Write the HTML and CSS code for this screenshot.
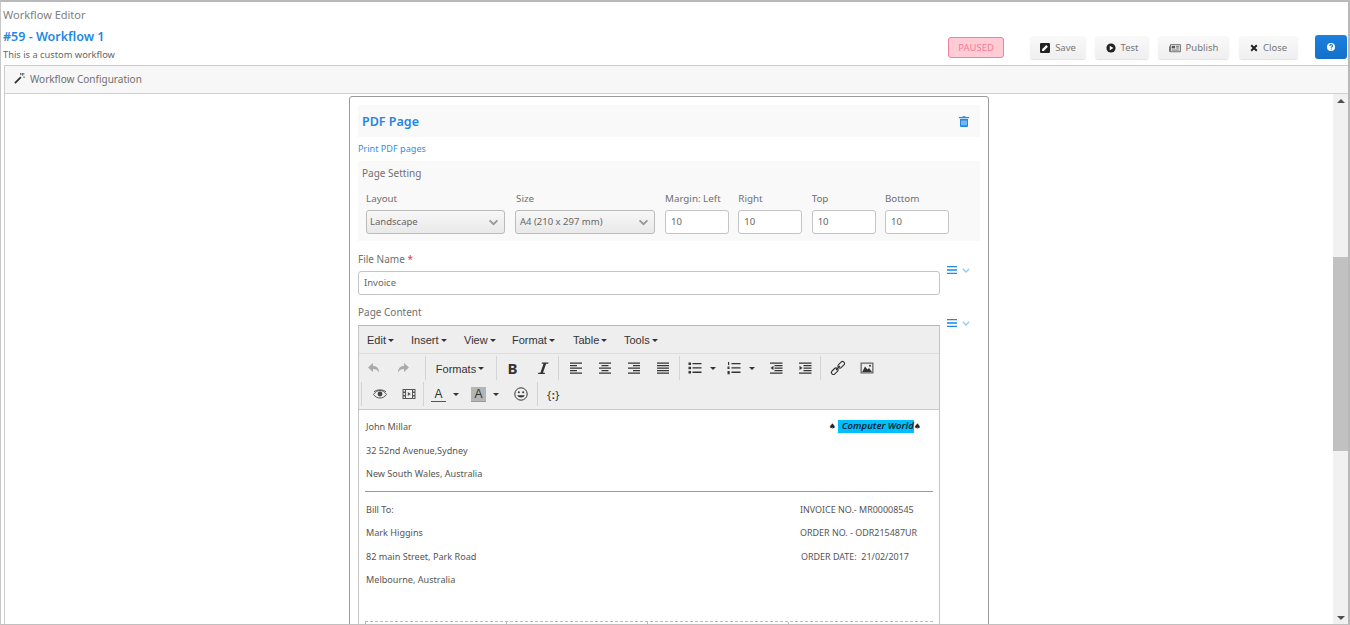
FILE: index.html
```html
<!DOCTYPE html>
<html lang="en">
<head>
<meta charset="utf-8">
<title>Workflow Editor</title>
<link rel="stylesheet" href="styles.css">
</head>
<body>
<div class="frame">
  <header class="top">
    <div class="titles">
      <div class="crumb">Workflow Editor</div>
      <h1 class="wf-name">#59 - Workflow 1</h1>
      <div class="wf-desc">This is a custom workflow</div>
    </div>
    <div class="actions">
      <span class="badge">PAUSED</span>
      <button class="btn btn-save"><svg viewBox="0 0 12 12" class="bi"><path d="M1.500 0h9A1.500 1.500 0 0 1 12 1.500v9a1.500 1.500 0 0 1-1.500 1.500h-9A1.500 1.500 0 0 1 0 10.500v-9A1.500 1.500 0 0 1 1.500 0z" fill="#222"/><path d="M2.500 9.500V7.500L7.500 2.500l2 2-5 5z" fill="#fff"/></svg>Save</button>
      <button class="btn btn-test"><svg viewBox="0 0 12 12" class="bi"><circle cx="6" cy="6" r="5.500" fill="#222"/><path d="M4.500 3.200 9 6l-4.500 2.800z" fill="#fff"/></svg>Test</button>
      <button class="btn btn-publish"><svg viewBox="0 0 14 12" class="bi bi-wide"><path d="M1.500 2h12v8.500h-12z" fill="none" stroke="#555"/><path d="M.5 4v6.500" stroke="#555" fill="none"/><path d="M3 3.500h4v3H3z" fill="#555"/><path d="M8 4h4M8 6h4M3 8.500h9" stroke="#555" fill="none"/></svg>Publish</button>
      <button class="btn btn-close"><svg viewBox="0 0 10 10" class="bi bi-x"><path d="M1.500 1.500l7 7M8.500 1.500l-7 7" stroke="#222" stroke-width="2.400" fill="none"/></svg>Close</button>
      <button class="btn-help" aria-label="Help"><svg viewBox="0 0 12 12" class="bi-help"><circle cx="6" cy="6" r="4.800" fill="#fff"/><path d="M4.300 4.900c0-2.300 3.500-2.300 3.500-.2 0 1.300-1.400 1.200-1.400 2.200" stroke="#1976d2" stroke-width="1.300" fill="none"/><path d="M5.700 7.700h1.400v1.300H5.700z" fill="#1976d2"/></svg></button>
    </div>
  </header>

  <section class="panel">
    <div class="panel-head">
      <svg viewBox="0 0 12 12" class="wand"><path d="M1 11 7.500 4.500" stroke="#333" stroke-width="2" fill="none"/><path d="M8 1h3.500M9.500 0v3M7 0l.5 2.500M10 4.500h2" stroke="#555" stroke-width="1" fill="none"/></svg>
      <span>Workflow Configuration</span>
    </div>
    <div class="panel-body">
      <div class="scroll-area">
        <div class="card">
          <div class="card-title">
            <h2>PDF Page</h2>
            <svg viewBox="0 0 10 11" class="trash"><path d="M3.500 1V.300h3V1H10v1.300H0V1z" fill="#1e88e5"/><path d="M1 3h8v7a1 1 0 0 1-1 1H2a1 1 0 0 1-1-1z" fill="#1e88e5"/><path d="M3 4.500v4.800M5 4.500v4.800M7 4.500v4.800" stroke="#fff" stroke-width=".8"/></svg>
          </div>
          <a class="card-link">Print PDF pages</a>
          <div class="settings">
            <div class="settings-title">Page Setting</div>
            <div class="settings-grid">
              <label class="f f-layout"><span>Layout</span><div class="sel">Landscape<svg viewBox="0 0 12 8" class="chev"><path d="M1.500 1.500 6 6l4.500-4.500" fill="none" stroke="#999" stroke-width="2.200"/></svg></div></label>
              <label class="f f-size"><span>Size</span><div class="sel">A4 (210 x 297 mm)<svg viewBox="0 0 12 8" class="chev"><path d="M1.500 1.500 6 6l4.500-4.500" fill="none" stroke="#999" stroke-width="2.200"/></svg></div></label>
              <label class="f f-num"><span>Margin: Left</span><div class="inp">10</div></label>
              <label class="f f-num"><span>Right</span><div class="inp">10</div></label>
              <label class="f f-num"><span>Top</span><div class="inp">10</div></label>
              <label class="f f-num"><span>Bottom</span><div class="inp">10</div></label>
            </div>
          </div>

          <div class="row row-file">
            <div class="row-main">
              <div class="lbl">File Name <b class="req">*</b></div>
              <div class="inp inp-wide">Invoice</div>
            </div>
            <div class="row-tools">
              <svg viewBox="0 0 10 8" class="bars"><path d="M0 .7h10M0 4h10M0 7.300h10" stroke="#1e88e5" stroke-width="1.300"/></svg>
              <svg viewBox="0 0 8 5" class="mini"><path d="M.8.800 4 4 7.200.800" fill="none" stroke="#90caf9" stroke-width="1.300"/></svg>
            </div>
          </div>

          <div class="row row-content">
            <div class="row-main">
              <div class="lbl lbl-content">Page Content</div>
              <div class="editor">
                <div class="menubar">
                  <span class="m m1">Edit<i class="car"></i></span>
                  <span class="m m2">Insert<i class="car"></i></span>
                  <span class="m m3">View<i class="car"></i></span>
                  <span class="m m4">Format<i class="car"></i></span>
                  <span class="m m5">Table<i class="car"></i></span>
                  <span class="m m6">Tools<i class="car"></i></span>
                </div>
                <div class="toolbar">
                  <div class="tb-row tb-row1">
                    <div class="grp grp-first">
                      <span class="tb"><svg viewBox="0 0 16 16" class="ico dim"><path d="M7 3 2 7.500 7 12V9c3 0 4.500 1 6 3.500C13 8.500 11 6 7 6z"/></svg></span>
                      <span class="tb"><svg viewBox="0 0 16 16" class="ico dim"><path d="M9 3l5 4.500L9 12V9c-3 0-4.500 1-6 3.500C3 8.500 5 6 9 6z"/></svg></span>
                    </div>
                    <div class="grp grp-formats"><span class="tb tb-formats">Formats<i class="car"></i></span></div>
                    <div class="grp grp-b">
                      <span class="tb tb-bold"><span class="gl gl-b">B</span></span>
                      <span class="tb"><svg viewBox="0 0 16 16" class="ico"><path d="M7 2.500h6.500l-.3 1.200h-2.100L8 12.800h2L9.700 14H3l.3-1.200h2.100L8.500 3.700H6.700z"/></svg></span>
                    </div>
                    <div class="grp grp-align">
                      <span class="tb"><svg viewBox="0 0 16 16" class="ico"><path d="M2 2.500h12v1.300H2zM2 5h7v1.300H2zM2 7.500h12v1.300H2zM2 10h7v1.300H2zM2 12.500h12v1.300H2z"/></svg></span>
                      <span class="tb"><svg viewBox="0 0 16 16" class="ico"><path d="M2 2.500h12v1.300H2zM4.500 5h7v1.300h-7zM2 7.500h12v1.300H2zM4.500 10h7v1.300h-7zM2 12.500h12v1.300H2z"/></svg></span>
                      <span class="tb"><svg viewBox="0 0 16 16" class="ico"><path d="M2 2.500h12v1.300H2zM7 5h7v1.300H7zM2 7.500h12v1.300H2zM7 10h7v1.300H7zM2 12.500h12v1.300H2z"/></svg></span>
                      <span class="tb"><svg viewBox="0 0 16 16" class="ico"><path d="M2 2.500h12v1.300H2zM2 5h12v1.300H2zM2 7.500h12v1.300H2zM2 10h12v1.300H2zM2 12.500h12v1.300H2z"/></svg></span>
                    </div>
                    <div class="grp grp-lists">
                      <span class="tb tb-split"><svg viewBox="0 0 16 16" class="ico"><path d="M1.500 2.500h2.500V5H1.500zM1.500 6.800h2.500v2.500H1.500zM1.500 11h2.500v2.500H1.500zM5.500 3h9v1.300h-9zM5.500 7.300h9v1.300h-9zM5.500 11.600h9v1.300h-9z"/></svg><i class="car car-split"></i></span>
                      <span class="tb tb-split tb-split2"><svg viewBox="0 0 16 16" class="ico"><path d="M2 2h1.200v3H2zM1.500 6.500h2.200v1H2.800v.7h.9v.8H1.500zM1.500 11h2.200v3.200H1.500zM5.500 3h9v1.300h-9zM5.500 7.300h9v1.300h-9zM5.500 11.600h9v1.300h-9z"/></svg><i class="car car-split"></i></span>
                      <span class="tb"><svg viewBox="0 0 16 16" class="ico"><path d="M2 2.500h12.500v1.300H2zM6.500 5h8v1.300h-8zM6.500 7.500h8v1.300h-8zM6.500 10h8v1.300h-8zM2 12.500h12.500v1.300H2zM5.500 5.700v4.400L2.500 7.900z"/></svg></span>
                      <span class="tb"><svg viewBox="0 0 16 16" class="ico"><path d="M2 2.500h12.500v1.300H2zM6.500 5h8v1.300h-8zM6.500 7.500h8v1.300h-8zM6.500 10h8v1.300h-8zM2 12.500h12.500v1.300H2zM2.500 5.700v4.400l3-2.200z"/></svg></span>
                    </div>
                    <div class="grp grp-media">
                      <span class="tb"><svg viewBox="0 0 16 16" class="ico"><g fill="none" stroke="#333" stroke-width="1.100"><rect x="1" y="9.200" width="7.500" height="4" rx="2" transform="rotate(-45 4.700 11.200)"/><rect x="7.500" y="2.800" width="7.500" height="4" rx="2" transform="rotate(-45 11.200 4.800)"/><path d="M6 10l4-4"/></g></svg></span>
                      <span class="tb"><svg viewBox="0 0 16 16" class="ico"><path d="M1.500 2.500h13v11h-13zM2.800 3.800v8.400h10.400V3.800z" fill-rule="evenodd" fill="#666"/><path d="M3.200 12 6 6.500l2.500 3 1.500-1.500 3 4z"/><circle cx="11" cy="5.800" r="1"/></svg></span>
                    </div>
                  </div>
                  <div class="tb-row tb-row2">
                    <div class="grp grp-view">
                      <span class="tb"><svg viewBox="0 0 16 16" class="ico"><path d="M1.500 8.500c2-3 4-4 6.500-4s4.500 1 6.500 4c-2 2.500-4 3.500-6.500 3.500s-4.500-1-6.500-3.500z" fill="none" stroke="#444" stroke-width=".9"/><circle cx="8" cy="8" r="2.400" fill="#444"/><path d="M2 5.800C4.500 3.300 11.500 3.300 14 5.800" fill="none" stroke="#444" stroke-width=".9"/></svg></span>
                      <span class="tb"><svg viewBox="0 0 16 16" class="ico ico-soft"><path d="M1.500 3h13v10h-13zM2.500 4v1.500h1.500V4zM2.500 7v2h1.500V7zM2.500 10.500V12h1.500v-1.500zM12 4v1.500h1.500V4zM12 7v2h1.500V7zM12 10.500V12h1.500v-1.500zM5 4v8h6V4z" fill-rule="evenodd"/><path d="M6.800 6v4l3-2z"/></svg></span>
                    </div>
                    <div class="grp grp-color">
                      <span class="tb tb-split tb-color"><span class="color-a">A</span><i class="car car-split"></i></span>
                      <span class="tb tb-split tb-color tb-color2"><span class="color-a color-bg">A</span><i class="car car-split"></i></span>
                      <span class="tb tb-emoji"><svg viewBox="0 0 16 16" class="ico"><circle cx="8" cy="8" r="6.200" fill="none" stroke="#333" stroke-width="1"/><circle cx="5.800" cy="6.300" r="1"/><circle cx="10.200" cy="6.300" r="1"/><path d="M4.300 9.300c1 3 6.400 3 7.400 0z"/></svg></span>
                    </div>
                    <div class="grp grp-var"><span class="tb"><span class="gl gl-var">{<b>:</b>}</span></span></div>
                  </div>
                </div>
                <div class="doc">
                  <div class="doc-top">
                    <div class="doc-left">
                      <p>John Millar</p>
                      <p>32 52nd Avenue,Sydney</p>
                      <p>New South Wales, Australia</p>
                    </div>
                    <div class="brand"><span class="spade">♠</span><em class="hl">Computer World</em><span class="spade spade-r">♠</span></div>
                  </div>
                  <hr class="doc-hr">
                  <div class="doc-bill">
                    <div class="doc-left">
                      <p>Bill To:</p>
                      <p>Mark Higgins</p>
                      <p>82 main Street, Park Road</p>
                      <p>Melbourne, Australia</p>
                    </div>
                    <div class="doc-right">
                      <p>INVOICE NO.- MR00008545</p>
                      <p>ORDER NO. - ODR215487UR</p>
                      <p class="date">ORDER DATE:&nbsp; 21/02/2017</p>
                    </div>
                  </div>
                  <div class="dash-table"><span></span><span></span><span></span><span></span></div>
                </div>
              </div>
            </div>
            <div class="row-tools row-tools2">
              <svg viewBox="0 0 10 8" class="bars"><path d="M0 .7h10M0 4h10M0 7.300h10" stroke="#1e88e5" stroke-width="1.300"/></svg>
              <svg viewBox="0 0 8 5" class="mini"><path d="M.8.800 4 4 7.200.800" fill="none" stroke="#90caf9" stroke-width="1.300"/></svg>
            </div>
          </div>
        </div>
      </div>
      <div class="scrollbar">
        <i class="arrow arrow-up"></i>
        <div class="thumb"></div>
        <i class="arrow arrow-down"></i>
      </div>
    </div>
  </section>
</div>
</body>
</html>
```

FILE: styles.css
```css
* { box-sizing: border-box; }
html, body { margin: 0; padding: 0; height: 100%; overflow: hidden; background: #fff; }
body { font-family: "Noto Sans", sans-serif; font-size: 10px; color: #666; }
p, h1, h2 { margin: 0; }

.frame {
  width: 1350px; height: 625px; display: flex; flex-direction: column;
  border-top: 2px solid #b9b9b9; border-left: 1px solid #c8c8c8; border-right: 2px solid #b9b9b9; border-bottom: 1px solid #c0c0c0;
  overflow: hidden;
}

.top { height: 63px; flex: none; display: flex; justify-content: space-between; padding-left: 2px; }
.titles { padding-top: 5px; }
.crumb { font-size: 11px; line-height: 16px; color: #808080; }
.wf-name { font-size: 12.500px; font-weight: 600; line-height: 18px; color: #1e88e5; margin-top: 5px; }
.wf-desc { font-size: 9.300px; line-height: 14px; color: #666; margin-top: 2px; }

.actions { display: flex; align-items: flex-start; padding-top: 33px; padding-right: 1px; }
.badge {
  width: 56px; height: 21px; margin-top: 2px; margin-right: 26px; border: 1px solid #f57f9d; border-radius: 3px; background: #ffccd6;
  color: #f67c98; font-size: 9.500px; line-height: 19px; text-align: center;
}
.btn {
  height: 23px; margin-top: 1px; border: 0; border-radius: 3px; padding: 0; font: 9.500px "Noto Sans", sans-serif; color: #777;
  background: linear-gradient(#f9f9f9, #efefef); box-shadow: 0 1px 1px rgba(0,0,0,.12);
  display: flex; align-items: center; justify-content: center; gap: 5px;
}
.btn-save { width: 56px; margin-right: 9px; }
.btn-test { width: 54px; margin-right: 9px; }
.btn-publish { width: 71px; margin-right: 10px; }
.btn-close { width: 59px; margin-right: 17px; }
.bi { width: 10px; height: 10px; }
.bi-wide { width: 12px; height: 10px; }
.bi-x { width: 8px; height: 8px; }
.btn-help {
  width: 32px; height: 24px; border: 0; border-radius: 3px; padding: 0; background: linear-gradient(#1b80e0, #1570c8);
  display: flex; align-items: center; justify-content: center;
}
.bi-help { width: 10px; height: 10px; }

.panel { flex: 1; min-height: 0; margin-left: 3px; display: flex; flex-direction: column; border-left: 1px solid #ccc; border-top: 1px solid #ccc; }
.panel-head { height: 28px; flex: none; background: #f7f7f7; border-bottom: 1px solid #d0d0d0; display: flex; align-items: center; gap: 5px; padding: 0 0 2px 9px; font-size: 10px; color: #707070; }
.wand { width: 11px; height: 11px; }
.panel-body { flex: 1; min-height: 0; display: flex; }
.scroll-area { flex: 1; min-width: 0; overflow: hidden; padding: 2px 0 0 344px; }

.scrollbar { width: 15px; flex: none; background: #f1f1f1; position: relative; display: flex; flex-direction: column; }
.arrow { position: absolute; left: 4px; width: 0; height: 0; border-left: 4px solid transparent; border-right: 4px solid transparent; }
.arrow-up { top: 5px; border-bottom: 4px solid #505050; }
.arrow-down { bottom: 4px; border-top: 4px solid #505050; }
.thumb { position: absolute; left: 0; right: 0; top: 163px; height: 194px; background: #c1c1c1; }

.card { width: 640px; height: 560px; border: 1px solid #999; border-radius: 3px; padding: 8px 8px 0; overflow: hidden; background: #fff; }
.card-title { height: 32px; background: #f9f9f9; display: flex; align-items: center; justify-content: space-between; padding: 0 11px 0 4px; }
.card-title h2 { font-size: 12.500px; font-weight: 600; color: #1e88e5; }
.trash { width: 10px; height: 11px; }
.card-link { display: block; font-size: 9.100px; line-height: 14px; margin-top: 5px; color: #2f8fe6; }
.settings { height: 80px; margin-top: 5px; background: #f9f9f9; padding: 5px 4px 0; }
.settings-title { font-size: 10px; line-height: 14px; color: #707070; }
.settings-grid { display: flex; margin-top: 11px; padding-left: 4px; }
.f { display: block; font-size: 9.800px; line-height: 14px; color: #707070; }
.f span { display: block; height: 19px; padding-top: 1px; }
.f-layout { width: 149px; }
.f-size { width: 150px; }
.f-size span { padding-left: 1px; }
.f-num { width: 64px; margin-right: 9.330px; }
.sel {
  width: 139px; height: 24px; border: 1px solid #bbb; border-radius: 3px; background: linear-gradient(#f7f7f7, #e9e9e9);
  padding: 0 4px 0 3px; font-size: 9.500px; line-height: 22px; color: #666; display: flex; align-items: center; justify-content: space-between;
}
.f-size .sel { width: 140px; padding-left: 4px; }
.chev { width: 11px; height: 7px; margin-right: 1px; }
.inp { height: 24px; border: 1px solid #c4c4c4; border-radius: 3px; background: #fff; padding: 0 5px; font-size: 9.500px; line-height: 22px; color: #666; }

.row { display: flex; }
.row-file { margin-top: 11px; }
.row-content { margin-top: 10px; }
.row-main { width: 582px; flex: none; }
.lbl { font-size: 10px; line-height: 14px; height: 19px; color: #707070; }
.lbl-content { height: 20px; }
.req { color: #e53935; font-weight: 400; }
.inp-wide { width: 582px; }
.row-tools { display: flex; align-items: center; gap: 5px; height: 8px; margin: 14px 0 0 7px; }
.bars { width: 10px; height: 8px; }
.mini { width: 8px; height: 5px; }

.editor { border: 1px solid #c4c4c4; border-bottom: 0; border-top-color: #b5b5b5; height: 320px; overflow: hidden; font-family: "Liberation Sans", sans-serif; }
.menubar { height: 28px; background: #eee; border-bottom: 1px solid #dcdcdc; display: flex; align-items: center; font-size: 11px; color: #333; }
.m { display: block; }
.m1 { margin-left: 8px; width: 44px; }
.m2 { width: 53px; }
.m3 { width: 48px; }
.m4 { width: 61px; }
.m5 { width: 51px; }
.car { display: inline-block; width: 0; height: 0; margin-left: 2px; vertical-align: 2px; border-left: 3px solid transparent; border-right: 3px solid transparent; border-top: 3px solid #333; }
.toolbar { height: 56px; background: #eee; border-bottom: 1px solid #c8c8c8; }
.tb-row { display: flex; height: 26px; }
.tb-row1 { padding-top: 2px; height: 28px; }
.tb-row2 { padding-left: 2px; }
.grp { display: flex; align-items: center; border-left: 1px solid #d4d4d4; height: 24px; }
.grp-first { border-left: 0; width: 66px; }
.grp-formats { width: 71px; }
.grp-b { width: 62px; padding-left: 2px; }
.grp-align { width: 121px; padding-left: 2px; }
.grp-lists { width: 141px; padding-left: 1px; }
.grp-media { padding-left: 2px; }
.grp-view { width: 62px; padding-left: 3px; }
.grp-color { width: 114px; padding-left: 1px; }
.grp-var { padding-left: 1px; }
.tb { width: 29px; height: 24px; display: flex; align-items: center; justify-content: center; flex: none; font-size: 11px; color: #333; }
.tb-formats { width: 70px; padding: 1px 2px 0 0; }
.tb-bold { padding-right: 2px; }
.tb-split { width: 42px; justify-content: flex-start; padding-left: 6px; }
.tb-split2 { width: 38px; padding-left: 3px; }
.tb-color { padding-left: 6px; width: 42px; }
.tb-color2 { width: 39px; padding-left: 4px; }
.car-split { margin-left: 7px; vertical-align: 0; }
.ico { width: 16px; height: 16px; fill: #333; display: block; flex: none; }
.ico.dim { fill: #aaa; }
.ico.ico-soft { fill: #555; }
.gl-b { font-size: 15px; font-weight: 700; font-family: "Noto Sans", sans-serif; color: #333; }
.gl-var { font-size: 11px; letter-spacing: .5px; font-family: "Noto Sans", sans-serif; font-weight: 400; color: #333; }
.gl-var b { color: #333; font-weight: 700; }
.color-a { width: 15px; text-align: center; font-size: 12px; line-height: 14px; color: #333; border-bottom: 1px solid #555; display: block; flex: none; }
.color-bg { background: #b5b5b5; border-bottom-color: #999; }

.doc { position: relative; height: 240px; background: #fff; padding: 0 6px; font-family: "Noto Sans", sans-serif; font-size: 9.100px; color: #555; }
.doc p { line-height: 12px; margin-bottom: 11.500px; white-space: nowrap; }
.doc-top { display: flex; justify-content: space-between; padding-top: 10px; height: 81px; }
.doc-top .doc-left { padding-top: 1px; }
.brand { display: flex; align-items: center; height: 13px; margin-right: 12px; font-size: 9.500px; color: #222; }
.doc-left { padding-left: 1px; }
.spade { font-size: 8px; line-height: 13px; color: #222; font-family: "DejaVu Sans", sans-serif; }
.hl { display: block; width: 76px; height: 13px; margin-left: 2px; background: #00bfff; font-weight: 600; line-height: 12px; padding-left: 4px; white-space: nowrap; color: #123; }
.doc-hr { margin: 0; border: 0; border-top: 1px solid #999; height: 0; }
.doc-bill { display: flex; justify-content: space-between; padding-top: 11.500px; height: 129px; }
.doc-right { width: 133px; font-size: 8.950px; }
.date { padding-left: 1px; }
.dash-table { display: grid; grid-template-columns: repeat(3, 141px) 1fr; height: 6px; border-top: 1px dashed #bbb; }
.dash-table span { border-left: 1px dashed #bbb; }
```
